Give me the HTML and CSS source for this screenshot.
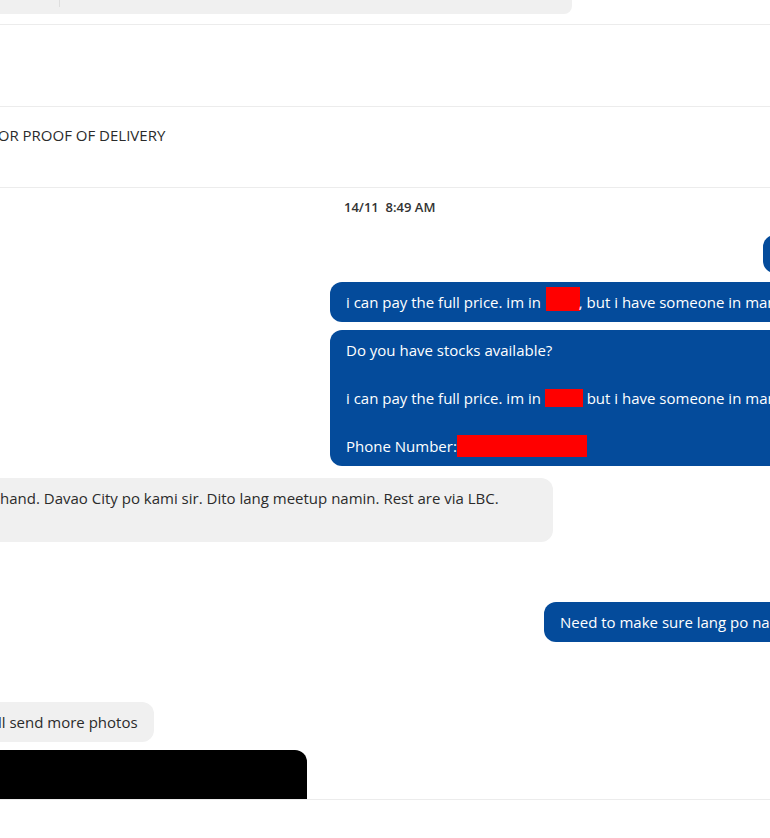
FILE: index.html
```html
<!DOCTYPE html>
<html lang="en">
<head>
    <meta charset="UTF-8">
    <meta name="viewport" content="width=device-width, initial-scale=1.0">
    <title>Conversation</title>
    <link rel="stylesheet" href="styles.css">
</head>
<body>
    <div class="page">
        <div class="quote-bar"><span class="tick"></span></div>

        <section class="panel panel-empty"></section>
        <section class="panel panel-note">
            <p class="note-text">FOR PROOF OF DELIVERY</p>
        </section>

        <main class="thread">
            <div class="stamp">14/11&nbsp; 8:49 AM</div>

            <div class="row sent row-first">
                <div class="bubble blue">Hi po</div>
            </div>
            <div class="row sent row-second">
                <div class="bubble blue">i can pay the full price. im in <span class="redact r1"></span>, but i have someone in manila who can receive it</div>
            </div>
            <div class="row sent">
                <div class="bubble blue">Do you have stocks available?<br><br>i can pay the full price. im in <span class="redact r2"></span> but i have someone in manila who can receive it<br><br>Phone Number:<span class="redact r3"></span></div>
            </div>
            <div class="row received row-gray">
                <div class="bubble gray">hand. Davao City po kami sir. Dito lang meetup namin. Rest are via LBC.<br>&nbsp;</div>
            </div>
            <div class="row sent row-gap">
                <div class="bubble blue">Need to make sure lang po na legit</div>
            </div>
            <div class="row received row-gap">
                <div class="bubble gray short">ll send more photos</div>
            </div>
            <div class="row received">
                <div class="photo"></div>
            </div>
        </main>

        <div class="composer"></div>
    </div>
</body>
</html>
```

FILE: styles.css
```css
body {
    margin: 0;
    padding: 0;
    background-color: #ffffff;
    font-family: "Open Sans", "Noto Sans", Arial, sans-serif;
    font-size: 15px;
    color: #252525;
}
.page {
    width: 770px;
    height: 838px;
    overflow: hidden;
}
.quote-bar {
    width: 572px;
    height: 14px;
    margin-bottom: 10px;
    padding-left: 59px;
    box-sizing: border-box;
    background-color: #f0f0f0;
    border-bottom-right-radius: 8px;
}
.tick {
    display: block;
    width: 1px;
    height: 7px;
    background-color: #dedede;
}
.panel {
    border-top: 1px solid #ececec;
}
.panel-empty {
    height: 81px;
}
.panel-note {
    height: 81px;
    box-sizing: border-box;
    padding-top: 17px;
}
.note-text {
    margin: 0;
    margin-left: -10px;
    line-height: 22px;
    color: #2b2b2b;
    white-space: nowrap;
}
.thread {
    border-top: 1px solid #ececec;
    height: 611px;
    display: flex;
    flex-direction: column;
}
.stamp {
    margin-top: 10px;
    padding-left: 344px;
    font-size: 13px;
    font-weight: 600;
    color: #333333;
    line-height: 18px;
}
.row {
    display: flex;
    flex-shrink: 0;
    margin-top: 8px;
    white-space: nowrap;
}
.row.sent {
    padding-left: 330px;
}
.row.sent.row-first {
    margin-top: 19px;
    padding-left: 763px;
}
.row-second {
    margin-top: 9px;
}
.row-gray {
    margin-top: 12px;
}
.row-gap {
    margin-top: 60px;
}
.row.sent.row-gap {
    padding-left: 544px;
}
.bubble {
    padding: 8px 16px;
    line-height: 24px;
    border-radius: 12px;
}
.blue {
    background-color: #044b9b;
    color: #ffffff;
}
.row-first .bubble {
    height: 22px;
    overflow: hidden;
}
.gray {
    width: 537px;
    margin-left: -16px;
    background-color: #f0f0f0;
    color: #2b2b2b;
}
.gray.short {
    width: auto;
    margin-left: -18px;
}
.redact {
    display: inline-block;
    background-color: #ff0000;
    vertical-align: top;
}
.r1 {
    width: 34px;
    height: 24px;
    margin-top: -3px;
    margin-left: 1px;
    margin-right: -1px;
}
.r2 {
    width: 38px;
    height: 18px;
    margin-top: 3px;
}
.r3 {
    width: 130px;
    height: 22px;
    margin-top: 1px;
}
.photo {
    width: 307px;
    height: 49px;
    background-color: #000000;
    border-top-right-radius: 12px;
}
.composer {
    border-top: 1px solid #ececec;
}
```
